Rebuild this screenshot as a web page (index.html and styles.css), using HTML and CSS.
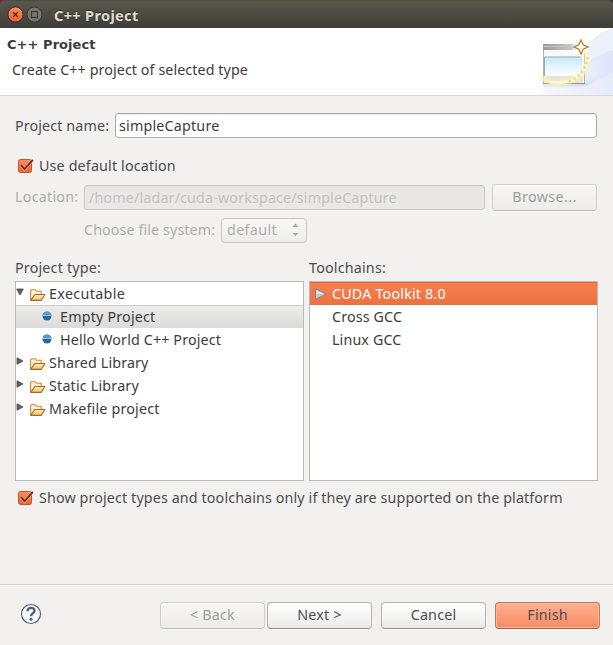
FILE: index.html
```html
<!DOCTYPE html>
<html lang="en">
<head>
<meta charset="utf-8">
<title>C++ Project</title>
<link rel="stylesheet" href="styles.css">
</head>
<body>
<svg class="defs" width="0" height="0" aria-hidden="true">
  <defs>
    <linearGradient id="folderFill" x1="0" y1="0" x2="0" y2="1"><stop offset="0" stop-color="#fff3c5"/><stop offset="1" stop-color="#f4bf65"/></linearGradient>
    <linearGradient id="orange" x1="0" y1="0" x2="0" y2="1"><stop offset="0" stop-color="#fb8e62"/><stop offset="1" stop-color="#f0602d"/></linearGradient>
    <linearGradient id="sky" x1="0" y1="0" x2="0" y2="1"><stop offset="0" stop-color="#c3e9ff"/><stop offset="1" stop-color="#fff"/></linearGradient>
    <linearGradient id="bar" x1="0" y1="0" x2="1" y2="0"><stop offset="0" stop-color="#999"/><stop offset="1" stop-color="#ddd"/></linearGradient>
    <linearGradient id="banner" x1="0" y1="0" x2="1" y2="0"><stop offset="0" stop-color="#fff"/><stop offset="1" stop-color="#dde4f7"/></linearGradient>
    <filter id="soft" x="-30%" y="-30%" width="160%" height="160%"><feGaussianBlur stdDeviation="1.3"/></filter>
    <symbol id="folder" viewBox="0 0 16 14"><path d="M1.500 12V3.500l1-1h3.500l1 1.500h4.500v3" fill="#fff2d0" stroke="#c48a3b"/><path d="M1.500 12.500L5.500 7H15l-3.500 5.500z" fill="url(#folderFill)" stroke="#ad651d" stroke-linejoin="round"/></symbol>
    <symbol id="ball" viewBox="0 0 10 10"><circle cx="5" cy="5" r="4.500" fill="#2468a8"/><path d="M1 4a4.100 4.100 0 0 1 8 0z" fill="#5f98ca"/><path d="M1 4.500h8" stroke="#a9cbe6" stroke-width=".9"/></symbol>
    <symbol id="check" viewBox="0 0 17 16"><rect x="1.500" y="1.500" width="13" height="13" rx="2" fill="url(#orange)" stroke="#c9542c"/><path d="M4 7.300l3.500 3.800L15 2.500" fill="none" stroke="#ffa784" stroke-width="3.400"/><path d="M4 7.200l3.500 3.900L15.800 1.800" fill="none" stroke="#66332a" stroke-width="2"/></symbol>
  </defs>
</svg>
<div class="window">
  <header class="titlebar">
    <svg class="controls" width="38" height="18" viewBox="0 0 38 18">
      <circle cx="9.500" cy="9.500" r="7.600" fill="url(#orange)" stroke="#34322d"/><path d="M7 7l5 5m0-5l-5 5" stroke="#54291b" stroke-width="1.300"/>
      <circle cx="28.500" cy="9.500" r="7.500" fill="#77756e" stroke="#373630"/><rect x="25.500" y="6.500" width="6" height="6" fill="none" stroke="#3b3934" stroke-width="1.200"/>
    </svg>
    <h1 class="t title">C++ Project</h1>
  </header>
  <section class="banner">
    <div><h2 class="heading">C++ Project</h2><p class="t subtitle">Create C++ project of selected type</p></div>
    <svg class="art" width="78" height="67" viewBox="0 0 78 67">
      <path d="M0 67V59L42 25Q61 6 78 0v67z" fill="url(#banner)"/>
      <path d="M8 58h42L78 44v23H8z" fill="#edf1fb" opacity=".5"/>
      <path d="M42 27Q58 10 78 0v22Q63 27 50 35z" fill="#edf1fb"/>
      <path d="M50 55L64 51 50 58H8v-2z" fill="#c6bfd9" opacity=".6" filter="url(#soft)"/>
      <rect x="8.500" y="16.500" width="41" height="39" fill="#f8f8f6" stroke="#b2b2ae"/>
      <rect x="8" y="16" width="42" height="6" fill="url(#bar)"/><path d="M8 18.500h32" stroke="#c6c6c6"/>
      <rect x="10" y="29" width="37" height="19" fill="url(#sky)"/><path d="M9.500 48V29h36" fill="none" stroke="#92afb4"/>
      <path d="M10 48h38v7H10z" fill="#e7e4d7"/><path d="M8 55.500h42" stroke="#929292"/>
      <path d="M6 49Q17 59 36 53T51 25" fill="none" stroke="#fff4a9" stroke-width="4.500" opacity=".75" filter="url(#soft)"/>
      <path d="M15 54Q49 59 54 25" fill="none" stroke="#fffbd8" stroke-width="3" opacity=".8"/>
      <path d="M34 53Q51 47 53 27" fill="none" stroke="#efd184" stroke-width="2.500" stroke-dasharray="2 3"/>
      <circle cx="46" cy="18.500" r="8" fill="#fff" opacity=".8" filter="url(#soft)"/>
      <path d="M46 12l2.200 4.800 4.800 2.200-4.800 2.200L46 26l-2.200-4.800L39 19l4.800-2.200z" fill="#fffdf0" stroke="#b67b20" stroke-width="1.200"/>
    </svg>
  </section>
  <main class="content">
    <div class="row name-row"><label class="t name-label">Project name:</label><div class="field"><span class="t capture">simpleCapture</span></div></div>
    <div class="check-row first-check"><svg class="check"><use href="#check"/></svg><span class="t use-default">Use default location</span></div>
    <div class="row location-row disabled"><label class="t location-label">Location:</label><div class="field disabled-field"><span class="t path">/home/ladar/cuda-workspace/simpleCapture</span></div><button class="button muted"><span class="t browse">Browse...</span></button></div>
    <div class="row system-row disabled"><label class="t system-label">Choose file system:</label><div class="select"><span class="t default">default</span><svg width="7" height="13" viewBox="0 0 7 13"><path d="M.5 4l3-3.500 3 3.500zM.5 10h6l-3 3z" fill="#aaa"/></svg></div></div>
    <div class="lists">
      <section><h3 class="t types">Project type:</h3><div class="list">
        <div class="item"><svg class="arrow" viewBox="0 0 8 8"><path d="M.7 1h6.600L4 7z"/></svg><svg class="folder"><use href="#folder"/></svg><span class="t executable">Executable</span></div>
        <div class="item child selected"><svg class="ball"><use href="#ball"/></svg><span class="t empty">Empty Project</span></div>
        <div class="item child"><svg class="ball"><use href="#ball"/></svg><span class="t hello">Hello World C++ Project</span></div>
        <div class="item"><svg class="arrow" viewBox="0 0 8 8"><path d="M1 .7v6.600L7 4z"/></svg><svg class="folder"><use href="#folder"/></svg><span class="t shared">Shared Library</span></div>
        <div class="item"><svg class="arrow" viewBox="0 0 8 8"><path d="M1 .7v6.600L7 4z"/></svg><svg class="folder"><use href="#folder"/></svg><span class="t static">Static Library</span></div>
        <div class="item"><svg class="arrow" viewBox="0 0 8 8"><path d="M1 .7v6.600L7 4z"/></svg><svg class="folder"><use href="#folder"/></svg><span class="t makefile">Makefile project</span></div>
      </div></section>
      <section><h3 class="t chains">Toolchains:</h3><div class="list">
        <div class="item tool active"><svg class="tool-icon" viewBox="0 0 12 12"><path d="M.5.7v10.600L11.300 6z" fill="#c4c8c9" stroke="#858887"/><path d="M1.500 2.500L9 6H1.500z" fill="#e5e8e8"/></svg><span class="t cuda">CUDA Toolkit 8.0</span></div>
        <div class="item tool"><span class="t cross">Cross GCC</span></div>
        <div class="item tool"><span class="t linux">Linux GCC</span></div>
      </div></section>
    </div>
    <div class="check-row last-check"><svg class="check"><use href="#check"/></svg><span class="t supported">Show project types and toolchains only if they are supported on the platform</span></div>
  </main>
  <footer class="actions">
    <svg class="help" width="22" height="22" viewBox="0 0 22 22"><circle cx="11" cy="11" r="9.500" fill="#f8f8fa" stroke="#52617f" stroke-width="1.200"/><path d="M7.500 8.200C7.500 3.700 15 4 14.500 8c-.3 2.500-3.500 2.300-3.500 5.200" fill="none" stroke="#4b5c80" stroke-width="2.300"/><circle cx="11" cy="16.200" r="1.500" fill="#4b5c80"/></svg>
    <button class="button muted"><span class="t back">&lt; Back</span></button><button class="button next-button"><span class="t next">Next &gt;</span></button><button class="button cancel-button"><span class="t cancel">Cancel</span></button><button class="button finish-button"><span class="t finish">Finish</span></button>
  </footer>
</div>
</body>
</html>
```
FILE: styles.css
```css
* { box-sizing: border-box; }
body { margin: 0; background: #f2f1f0; color: #4c4c4c; font: 14.3px/20px "Noto Sans", sans-serif; overflow: hidden; }
h1, h2, h3, p { margin: 0; font-weight: 400; font-size: inherit; }
svg { display: block; flex: none; }
.defs { position: absolute; }
.t { white-space: nowrap; flex: none; letter-spacing: .19px; }
.window { width: 613px; height: 645px; display: flex; flex-direction: column; background: linear-gradient(90deg, #762448 50%, #35332f 50%) top / 100% 10px no-repeat; }
.titlebar { height: 28px; padding-left: 6px; display: flex; align-items: center; background: linear-gradient(#4c4a43, #5a574b 2px, #3d3c38); border-radius: 5px 5px 0 0; flex: none; }
.titlebar .title { margin: 1px 0 0 10px; color: #dfdbd2; font-size: 14.5px; font-weight: 700; letter-spacing: .35px; text-shadow: 0 -1px #2c2b28; }
.banner { height: 68px; background: #fff; border-bottom: 1px solid #d9d8d7; display: flex; justify-content: space-between; flex: none; }
.heading { margin: 7px 0 0 7px; font: 700 13px/20px "DejaVu Sans", sans-serif; letter-spacing: .05px; color: #3c3c3c; }
.subtitle { margin: 5px 0 0 12px; color: #3c3c3c; letter-spacing: .08px; }
.content { height: 488px; padding: 17px 15px 0; flex: none; }
.row { display: flex; align-items: center; padding-right: 1px; }
.name-label { width: 100px; letter-spacing: .12px; }
.field { height: 25px; flex: 1; border: 1px solid #a9a7a4; border-radius: 3px; background: #fff; padding: 2px 3px; color: #3c3c3c; box-shadow: inset 0 1px #eee, 0 1px #fafafa; }
.check-row { height: 20px; display: flex; align-items: center; padding-left: 2px; gap: 5px; }
.check { width: 17px; height: 16px; }
.supported { letter-spacing: .12px; }
.use-default, .path { letter-spacing: .15px; }
.first-check { margin-top: 18px; }
.location-row { height: 28px; margin-top: 7px; }
.disabled { color: #b1adaa; }
.location-label { width: 69px; letter-spacing: .25px; }
.disabled-field { color: #c5c1bd; background: #e9e8e7; border-color: #cbc9c6; padding-left: 4px; margin-right: 7px; box-shadow: inset 0 1px #dfdedc, 0 1px #fafafa; }
.button { width: 105px; height: 27px; padding: 0 0 1px; border: 1px solid #b5b3b0; border-bottom-color: #969491; border-radius: 4px; background: linear-gradient(#fff, #f1f0ef 75%, #e9e8e6); box-shadow: inset 0 1px #fff, 0 1px #f9f8f8; color: #4c4c4c; font: inherit; line-height: 20px; text-align: center; }
.button.muted { color: #a09e9b; background: linear-gradient(#f7f6f5, #edecea); border-color: #cfcdca; border-bottom-color: #bebcb8; }
.browse { letter-spacing: .4px; }
.system-row { margin-top: 6px; height: 26px; padding-left: 69px; }
.system-label { width: 137px; letter-spacing: .1px; }
.select { width: 86px; height: 25px; display: flex; align-items: center; justify-content: space-between; padding: 0 7px 1px 5px; border: 1px solid #c9c6c2; border-radius: 4px; background: linear-gradient(#f9f8f7, #eeedeb); }
.default { letter-spacing: .35px; }
.lists { display: grid; grid-template-columns: 289px 289px; gap: 5px; margin-top: 15px; }
.lists h3 { margin-bottom: 3px; }
.list { height: 200px; border: 1px solid #bdbbb7; background: #fff; color: #3c3c3c; }
.item { height: 23px; display: flex; align-items: center; }
.item .t { line-height: 21px; }
.arrow { width: 8px; height: 8px; margin: -4px 5px 0 0; fill: #626262; stroke: #3c3c3c; stroke-width: .7; }
.folder { width: 17px; height: 15px; margin: 1px 3px 0 0; }
.executable { letter-spacing: .35px; }
.hello, .shared, .cross, .linux { letter-spacing: .13px; }
.child { padding-left: 26px; }
.ball { width: 10px; height: 10px; margin: -2px 8px 0 0; }
.selected { background: linear-gradient(#ececeb, #dcdbd8); box-shadow: inset 0 1px #cecdcb; }
.tool { padding-left: 22px; }
.active { color: #fff; padding-left: 5px; background: linear-gradient(#f67f50, #ed703e); box-shadow: inset 0 1px #e9672f; }
.tool-icon { width: 12px; height: 12px; margin-right: 5px; }
.last-check { margin-top: 7px; }
.actions { height: 61px; border-top: 1px solid #d5d3d1; display: flex; padding: 17px 0 0 20px; flex: none; box-shadow: inset 0 1px #faf9f8; }
.help { margin: 1px 118px 0 0; }
.next-button { margin-left: 2px; }
.cancel-button { margin-left: 9px; }
.finish-button { margin-left: 9px; background: linear-gradient(#ffb195, #f58b63); border-color: #bd7a62; border-bottom-color: #976451; box-shadow: inset 0 0 0 1px #ffb394; }
```
